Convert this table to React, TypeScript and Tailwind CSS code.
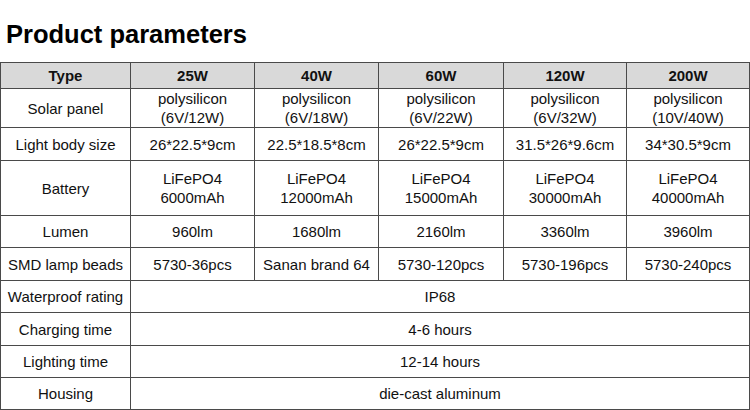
const cols = ['25W', '40W', '60W', '120W', '200W'];

const rows: { label: string; h: string; cells: string[][] | string }[] = [
  {
    label: 'Solar panel',
    h: 'h-[39px]',
    cells: [
      ['polysilicon', '(6V/12W)'],
      ['polysilicon', '(6V/18W)'],
      ['polysilicon', '(6V/22W)'],
      ['polysilicon', '(6V/32W)'],
      ['polysilicon', '(10V/40W)'],
    ],
  },
  {
    label: 'Light body size',
    h: 'h-[33px]',
    cells: [['26*22.5*9cm'], ['22.5*18.5*8cm'], ['26*22.5*9cm'], ['31.5*26*9.6cm'], ['34*30.5*9cm']],
  },
  {
    label: 'Battery',
    h: 'h-[55px]',
    cells: [
      ['LiFePO4', '6000mAh'],
      ['LiFePO4', '12000mAh'],
      ['LiFePO4', '15000mAh'],
      ['LiFePO4', '30000mAh'],
      ['LiFePO4', '40000mAh'],
    ],
  },
  {
    label: 'Lumen',
    h: 'h-[32px]',
    cells: [['960lm'], ['1680lm'], ['2160lm'], ['3360lm'], ['3960lm']],
  },
  {
    label: 'SMD lamp beads',
    h: 'h-[33px]',
    cells: [['5730-36pcs'], ['Sanan brand 64'], ['5730-120pcs'], ['5730-196pcs'], ['5730-240pcs']],
  },
  { label: 'Waterproof rating', h: 'h-[32px]', cells: 'IP68' },
  { label: 'Charging time', h: 'h-[33px]', cells: '4-6 hours' },
  { label: 'Lighting time', h: 'h-[32px]', cells: '12-14 hours' },
  { label: 'Housing', h: 'h-[32px]', cells: 'die-cast aluminum' },
];

const td = 'border border-[#4a4a4a] text-center align-middle p-0 leading-[19px]';

export default function App() {
  return (
    <div className="w-[750px] h-[410px] bg-white text-[#111] overflow-hidden" style={{ fontFamily: '"Liberation Sans", Arial, sans-serif' }}>
      <div className="h-[62px] pt-[21px] pl-[6px]">
        <h1 className="text-[25.5px] leading-[26px] font-bold text-black">Product parameters</h1>
      </div>
      <table className="table-fixed border-collapse w-[749px] text-[15px]">
        <colgroup>
          <col className="w-[130px]" />
          <col className="w-[124px]" />
          <col className="w-[124px]" />
          <col className="w-[125px]" />
          <col className="w-[123px]" />
          <col className="w-[123px]" />
        </colgroup>
        <thead>
          <tr className="h-[26px] bg-[#d9d9d9]">
            <th className={`${td} font-bold`}>Type</th>
            {cols.map((c) => (
              <th key={c} className={`${td} font-bold`}>
                {c}
              </th>
            ))}
          </tr>
        </thead>
        <tbody>
          {rows.map((r) => (
            <tr key={r.label} className={r.h}>
              <td className={`${td} whitespace-nowrap`}>{r.label}</td>
              {typeof r.cells === 'string' ? (
                <td className={td} colSpan={5}>
                  {r.cells}
                </td>
              ) : (
                r.cells.map((lines, i) => (
                  <td key={i} className={`${td} whitespace-nowrap`}>
                    {lines.map((l) => (
                      <div key={l}>{l}</div>
                    ))}
                  </td>
                ))
              )}
            </tr>
          ))}
        </tbody>
      </table>
    </div>
  );
}
